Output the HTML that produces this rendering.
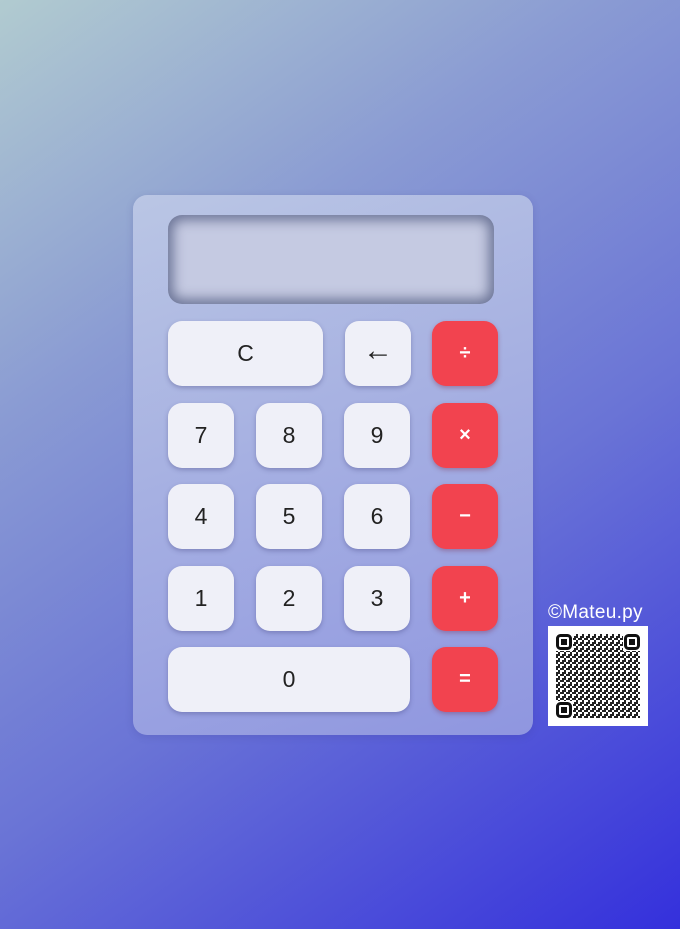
<!DOCTYPE html>
<html><head><meta charset="utf-8"><style>
*{margin:0;padding:0;box-sizing:border-box}
body{width:680px;height:929px;overflow:hidden;position:relative;font-family:"Liberation Sans",sans-serif;
background:linear-gradient(145deg,#b1cbd0 0%,#8a9bd3 30%,#6a74d6 60%,#3430dc 100%);}
.calc{position:absolute;left:133px;top:195px;width:400px;height:540px;border-radius:14px;
background:linear-gradient(160deg,#bac6e4 0%,#a6b0e2 45%,#8f96e0 100%);box-shadow:0 2px 8px rgba(60,60,140,.2)}
.disp{position:absolute;left:168px;top:215px;width:326px;height:89px;border-radius:14px;background:#c5cae2;
box-shadow:inset 0 0 12px 5px rgba(60,70,110,.65)}
.b{position:absolute;width:66px;height:65px;border-radius:14px;background:#eff0f8;color:#222;font-size:23px;
display:flex;align-items:center;justify-content:center;box-shadow:0 2px 5px rgba(60,60,120,.35)}
.r{background:#f2434f;color:#fff;font-size:20px;font-weight:bold;box-shadow:0 2px 5px rgba(120,30,60,.35)}
.txt{position:absolute;left:548px;top:602px;color:#fff;font-size:19px;letter-spacing:.3px}
.qr{position:absolute;left:548px;top:626px;width:100px;height:100px;background:#fff}
</style></head><body>
<div class="calc"></div>
<div class="disp"></div>
<div class="b" style="left:168px;top:321px;width:155px">C</div>
<div class="b" style="left:345px;top:321px;font-size:30px;padding-bottom:5px">←</div>
<div class="b r" style="left:432px;top:321px">÷</div>
<div class="b" style="left:168px;top:403px">7</div>
<div class="b" style="left:256px;top:403px">8</div>
<div class="b" style="left:344px;top:403px">9</div>
<div class="b r" style="left:432px;top:403px">×</div>
<div class="b" style="left:168px;top:484px">4</div>
<div class="b" style="left:256px;top:484px">5</div>
<div class="b" style="left:344px;top:484px">6</div>
<div class="b r" style="left:432px;top:484px">−</div>
<div class="b" style="left:168px;top:566px">1</div>
<div class="b" style="left:256px;top:566px">2</div>
<div class="b" style="left:344px;top:566px">3</div>
<div class="b r" style="left:432px;top:566px">+</div>
<div class="b" style="left:168px;top:647px;width:242px">0</div>
<div class="b r" style="left:432px;top:647px">=</div>
<div class="txt">©Mateu.py</div>
<div class="qr"><svg width="100" height="100" viewBox="0 0 100 100">
<defs><pattern id="p" width="6" height="6" patternUnits="userSpaceOnUse">
<rect x="0" y="0" width="2" height="2" fill="#222"/><rect x="4" y="2" width="2" height="2" fill="#222"/><rect x="2" y="4" width="2" height="2" fill="#222"/><rect x="4" y="4" width="2" height="2" fill="#222"/><rect x="2" y="0" width="2" height="2" fill="#222"/></pattern></defs>
<rect x="8" y="8" width="84" height="84" fill="url(#p)"/>
<g fill="#fff"><rect x="7" y="7" width="18" height="18"/><rect x="75" y="7" width="18" height="18"/><rect x="7" y="75" width="18" height="18"/></g>
<g fill="none" stroke="#111" stroke-width="3"><rect x="9.5" y="9.5" width="13" height="13" rx="3"/><rect x="77.5" y="9.5" width="13" height="13" rx="3"/><rect x="9.5" y="77.5" width="13" height="13" rx="3"/></g>
<g fill="#111"><rect x="13" y="13" width="6" height="6"/><rect x="81" y="13" width="6" height="6"/><rect x="13" y="81" width="6" height="6"/></g>
</svg></div>
</body></html>
